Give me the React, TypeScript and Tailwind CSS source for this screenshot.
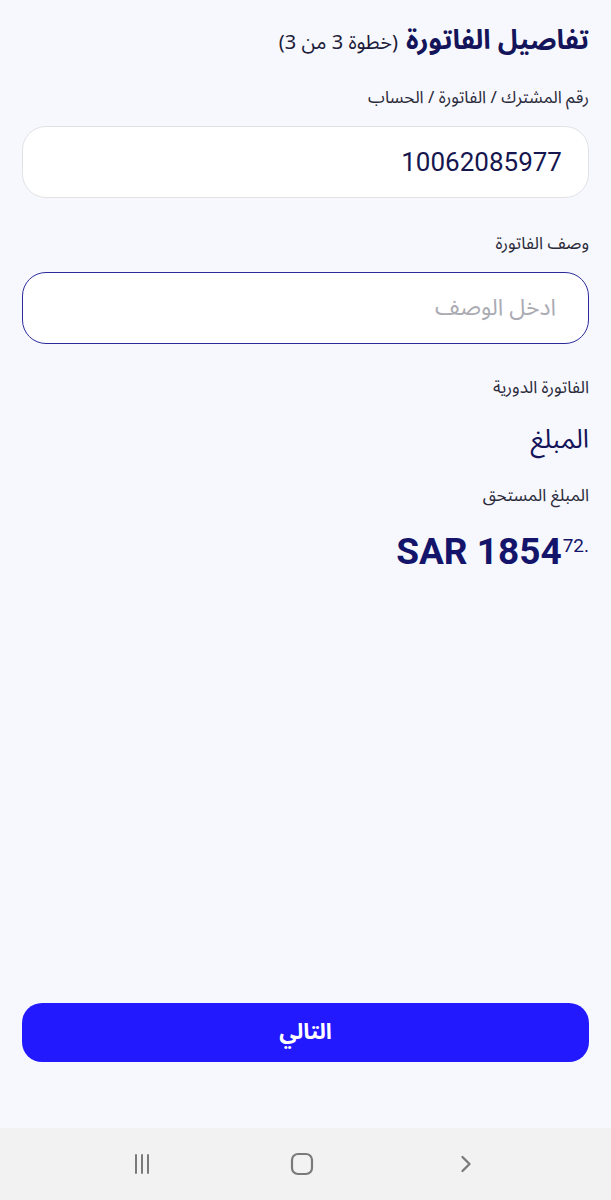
import { ChevronRight } from "lucide-react";

const arabic = "font-['Noto_Sans_Arabic','DejaVu_Sans',sans-serif]";

export default function App() {
  return (
    <div dir="rtl" className={`flex h-[1200px] w-full flex-col bg-[#f7f8fd] ${arabic}`}>
      <main className="flex flex-1 flex-col px-[22px] pt-6">
        <div className="flex items-baseline gap-2 leading-[34px]">
          <h1 className="text-[27px] font-bold text-[#14145a]">تفاصيل الفاتورة</h1>
          <span className="text-[20px] text-[#1c1c3a]">(خطوة 3 من 3)</span>
        </div>

        <label className="mt-[26px] text-[17px] leading-6 text-[#2a2a3a]">
          رقم المشترك / الفاتورة / الحساب
        </label>
        <div className="mt-4 flex h-[72px] items-center rounded-[24px] border border-[#e2e2e6] bg-white px-[26px]">
          <span className="font-['Roboto',sans-serif] text-[26px] text-[#16164f]">10062085977</span>
        </div>

        <label className="mt-[34px] text-[17px] leading-6 text-[#2a2a3a]">وصف الفاتورة</label>
        <div className="mt-4 flex h-[72px] items-center rounded-[24px] border-[1.5px] border-[#2b2b9c] bg-white px-8">
          <input
            placeholder="ادخل الوصف"
            className="w-full bg-transparent text-[23px] text-[#16164f] outline-none placeholder:text-[#ababb3]"
          />
        </div>

        <p className="mt-8 text-[17px] leading-6 text-[#2a2a3a]">الفاتورة الدورية</p>
        <p className="mt-6 text-[26px] leading-8 text-[#14145a]">المبلغ</p>
        <p className="mt-7 text-[17px] leading-6 text-[#2a2a3a]">المبلغ المستحق</p>
        <div className="mt-[22px] flex leading-[44px]">
          <span dir="ltr" className="font-['Roboto',sans-serif] text-[#14146b]">
            <span className="text-[37px] font-bold">SAR 1854</span>
            <span className="relative -top-[12px] ml-[1px] text-[19px]">72.</span>
          </span>
        </div>
      </main>

      <div className="px-[22px]">
        <button className="flex h-[59px] w-full items-center justify-center rounded-[20px] bg-[#2219ff] text-[22px] font-bold text-white">
          التالي
        </button>
      </div>

      <nav dir="ltr" className="mt-[66px] flex h-[72px] items-center justify-between bg-[#f2f2f3] pl-[132px] pr-[131px] text-[#7a7a7a]">
        <svg width="20" height="22" viewBox="0 0 20 22" fill="none" stroke="currentColor" strokeWidth="2" strokeLinecap="round">
          <path d="M4 2v18M10 2v18M16 2v18" />
        </svg>
        <svg width="24" height="24" viewBox="0 0 24 24" fill="none" stroke="currentColor" strokeWidth="2.2">
          <rect x="2" y="2" width="20" height="20" rx="6" />
        </svg>
        <ChevronRight className="h-7 w-7" strokeWidth={2} />
      </nav>
    </div>
  );
}
